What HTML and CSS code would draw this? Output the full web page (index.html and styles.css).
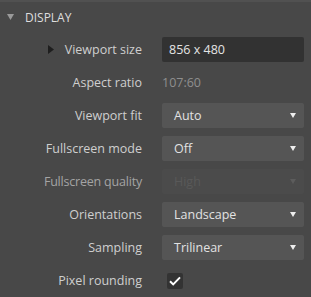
FILE: index.html
```html
<!DOCTYPE html>
<html lang="en">

<head>
    <meta charset="UTF-8">
    <meta name="viewport" content="width=device-width, initial-scale=1.0">
    <link rel="stylesheet" href="styles.css">
</head>

<body>
    <div class="panel">
        <div class="section-header">
            <svg class="caret" width="7" height="6" viewBox="0 0 7 6"><path d="M0 0h7L3.5 6z" /></svg>
            <span>DISPLAY</span>
        </div>
        <div class="rows">
            <div class="row">
                <label class="label">
                    <svg class="expander" width="6" height="9" viewBox="0 0 6 9"><path d="M0 0l6 4.5L0 9z" /></svg>
                    Viewport size
                </label>
                <div class="field input">856 x 480</div>
            </div>
            <div class="row">
                <label class="label">Aspect ratio</label>
                <div class="field static">107:60</div>
            </div>
            <div class="row">
                <label class="label">Viewport fit</label>
                <div class="field select">Auto<span class="arrow"></span></div>
            </div>
            <div class="row">
                <label class="label">Fullscreen mode</label>
                <div class="field select">Off<span class="arrow"></span></div>
            </div>
            <div class="row disabled">
                <label class="label">Fullscreen quality</label>
                <div class="field select">High<span class="arrow"></span></div>
            </div>
            <div class="row">
                <label class="label">Orientations</label>
                <div class="field select">Landscape<span class="arrow"></span></div>
            </div>
            <div class="row">
                <label class="label">Sampling</label>
                <div class="field select">Trilinear<span class="arrow"></span></div>
            </div>
            <div class="row">
                <label class="label">Pixel rounding</label>
                <div class="field">
                    <span class="checkbox">
                        <svg width="12" height="10" viewBox="0 0 12 10"><path d="M1 5.2l3.2 3.2L11 1.4" /></svg>
                    </span>
                </div>
            </div>
        </div>
    </div>
</body>

</html>
```
FILE: styles.css
```css
body {
    margin: 0;
    padding: 0;
    background: #484848;
    user-select: none;
}

.panel {
    border-top: 2px solid #515151;
    color: #cfcfcf;
    font-family: "Open Sans", "Noto Sans", sans-serif;
    font-size: 12.5px;
    height: 295px;
}

.section-header {
    align-items: center;
    color: #dedede;
    display: flex;
    font-size: 12px;
    height: 30px;
    padding-left: 7px;
}

.section-header .caret {
    fill: #9a9a9a;
    margin-right: 11px;
}

.rows {
    display: flex;
    flex-direction: column;
    gap: 8px;
    padding-top: 5px;
}

.row {
    align-items: center;
    display: flex;
    height: 25px;
}

.label {
    align-items: center;
    display: flex;
    justify-content: flex-end;
    padding-right: 20px;
    white-space: nowrap;
    width: 142px;
}

.label .expander {
    fill: #1e1e1e;
    margin-right: 11px;
}

.field {
    align-items: center;
    box-sizing: border-box;
    display: flex;
    height: 25px;
    width: 142px;
}

.field.input {
    background: #323232;
    border-radius: 2px;
    color: #e4e4e4;
    padding-left: 7px;
}

.field.static {
    color: #8f8f8f;
}

.field.select {
    background: #555555;
    border-radius: 2px;
    color: #e2e2e2;
    padding-left: 12px;
    position: relative;
}

.arrow {
    border-left: 3px solid transparent;
    border-right: 3px solid transparent;
    border-top: 5px solid #eeeeee;
    position: absolute;
    right: 8px;
    top: 10px;
}

.row.disabled .label {
    color: #a4a4a4;
    letter-spacing: -0.2px;
}

.row.disabled .field.select {
    background: #4b4b4b;
    color: #595959;
}

.row.disabled .arrow {
    border-top-color: #5c5c5c;
}

.checkbox {
    align-items: center;
    background: #333333;
    border-radius: 2px;
    display: flex;
    height: 16px;
    justify-content: center;
    margin-left: 5px;
    width: 16px;
}

.checkbox svg path {
    fill: none;
    stroke: #ffffff;
    stroke-width: 2;
}
```
